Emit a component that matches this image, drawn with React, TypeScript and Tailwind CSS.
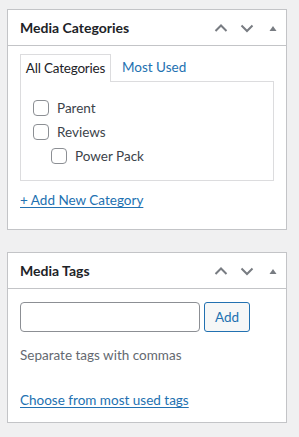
const font = { fontFamily: 'Lato, "Noto Sans", sans-serif' }

const Chevron = ({ up }: { up?: boolean }) => (
  <svg width="16" height="16" viewBox="0 0 16 16" className="text-[#787c82]">
    <path d={up ? 'M2.5 11 L8 5.5 L13.5 11' : 'M2.5 5.5 L8 11 L13.5 5.5'} fill="none" stroke="currentColor" strokeWidth="2" />
  </svg>
)

const PanelHeader = ({ title }: { title: string }) => (
  <div className="flex h-[36px] items-center justify-between border-b border-[#c3c4c7] pl-3 pr-[8px]">
    <h2 className="text-[14px] font-bold text-[#1d2327]">{title}</h2>
    <div className="flex items-center gap-[10px]">
      <Chevron up />
      <Chevron />
      <svg width="10" height="10" viewBox="0 0 10 10" className="ml-[3px] text-[#787c82]">
        <path d="M1.5 8 L5 3 L8.5 8 Z" fill="currentColor" />
      </svg>
    </div>
  </div>
)

const Check = ({ label, indent }: { label: string; indent?: boolean }) => (
  <label className={`flex h-[24px] items-center gap-[8px] ${indent ? 'pl-[18px]' : ''}`}>
    <span className="h-[16px] w-[16px] rounded-[4px] border border-[#8c8f94] bg-white" />
    <span className="text-[13.5px] text-[#3c434a]">{label}</span>
  </label>
)

export default function App() {
  return (
    <div className="min-h-[437px] bg-[#f0f0f1] pt-[9px] pl-[7px]" style={font}>
      <div className="w-[280px] border border-[#c3c4c7] bg-white">
        <PanelHeader title="Media Categories" />
        <div className="px-3 pt-[8px] pb-[20px]">
          <div className="flex">
            <div className="relative z-10 -mb-px flex h-[28px] w-[91px] items-center justify-center border border-b-0 border-[#dcdcde] bg-white text-[13.5px] tracking-[-0.2px] text-[#1d2327]">
              All Categories
            </div>
            <div className="flex h-[27px] items-center pl-[11px] text-[13.5px] text-[#2271b1]">Most Used</div>
          </div>
          <div className="border border-[#dcdcde] px-3 pt-[14px] pb-[12px]">
            <Check label="Parent" />
            <Check label="Reviews" />
            <Check label="Power Pack" indent />
          </div>
          <a className="mt-[10px] block text-[13.5px] leading-[18px] text-[#2271b1] underline underline-offset-2">+ Add New Category</a>
        </div>
      </div>

      <div className="mt-[22px] w-[280px] border border-[#c3c4c7] bg-white">
        <PanelHeader title="Media Tags" />
        <div className="px-3 pt-[13px] pb-[13px]">
          <div className="flex gap-[4px]">
            <input className="h-[30px] w-[180px] rounded-[4px] border border-[#8c8f94] bg-white px-2" />
            <button className="h-[30px] w-[46px] rounded-[3px] border border-[#2271b1] bg-[#f6f7f7] text-[13.5px] text-[#2271b1]">Add</button>
          </div>
          <p className="mt-[14px] text-[13.5px] leading-[18px] text-[#646970]">Separate tags with commas</p>
          <a className="mt-[27px] block text-[13.5px] leading-[18px] text-[#2271b1] underline underline-offset-2">Choose from most used tags</a>
        </div>
      </div>
    </div>
  )
}
